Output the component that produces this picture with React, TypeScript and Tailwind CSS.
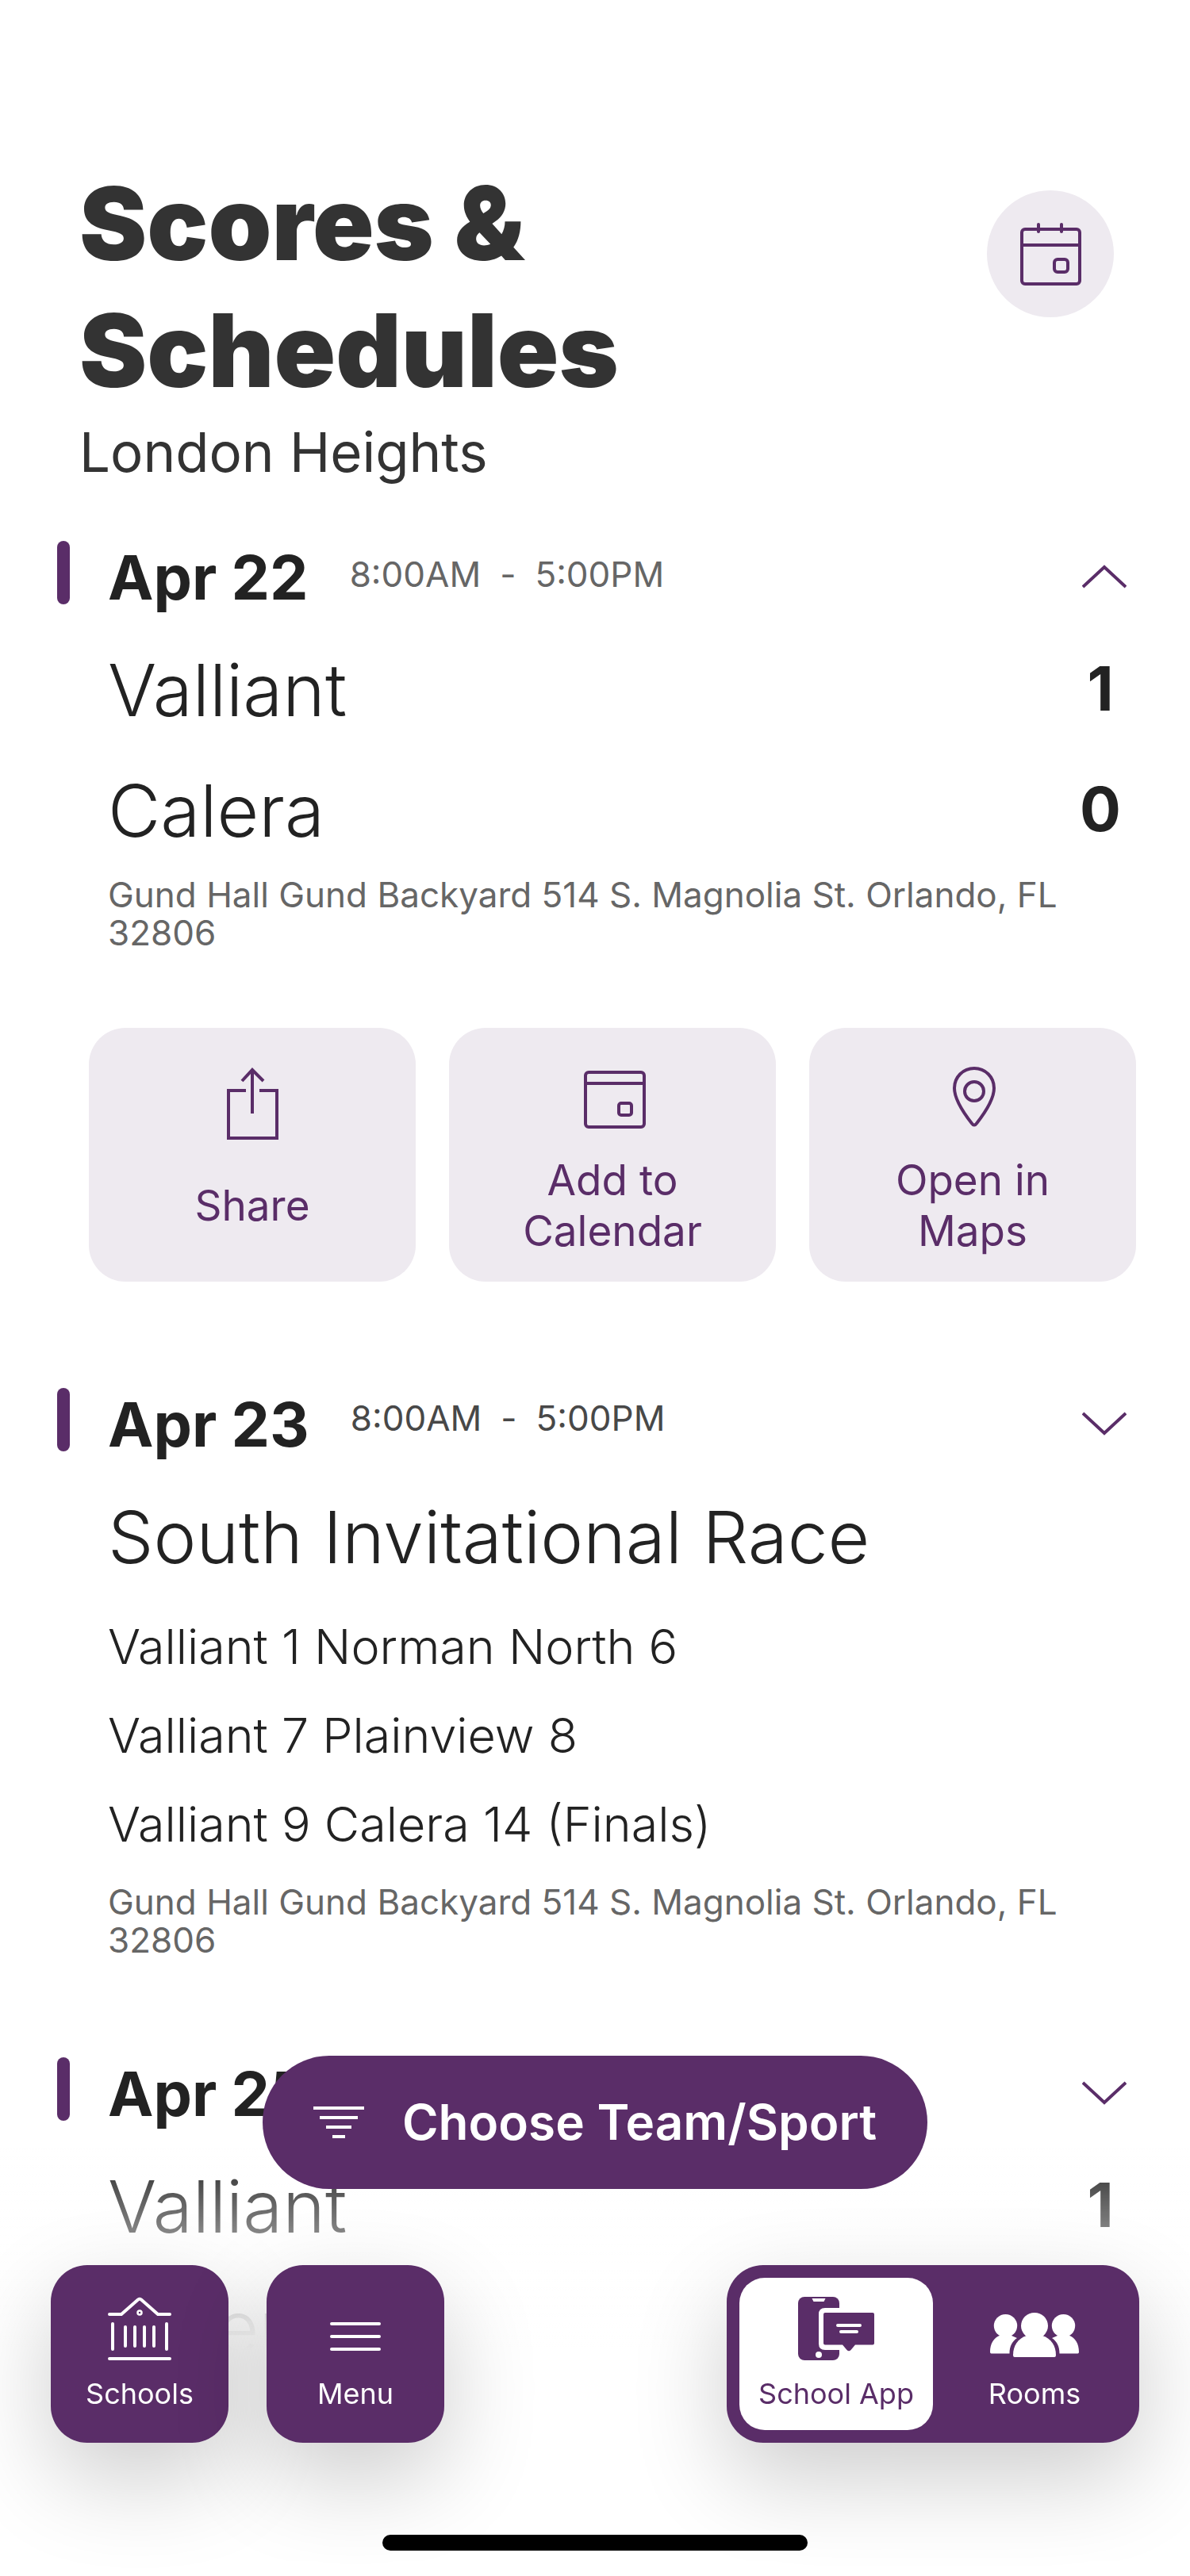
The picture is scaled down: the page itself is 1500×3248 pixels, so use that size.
import { useState } from 'react'

type Team = { name: string; score: number }

type GameEvent = {
  date: string
  start: string
  end: string
  teams?: Team[]
  title?: string
  results?: string[]
  location?: string
}

const address = 'Gund Hall Gund Backyard 514 S. Magnolia St. Orlando, FL 32806'

const events: GameEvent[] = [
  {
    date: 'Apr 22',
    start: '8:00AM',
    end: '5:00PM',
    teams: [
      { name: 'Valliant', score: 1 },
      { name: 'Calera', score: 0 },
    ],
    location: address,
  },
  {
    date: 'Apr 23',
    start: '8:00AM',
    end: '5:00PM',
    title: 'South Invitational Race',
    results: ['Valliant 1 Norman North 6', 'Valliant 7 Plainview 8', 'Valliant 9 Calera 14 (Finals)'],
    location: address,
  },
  {
    date: 'Apr 25',
    start: '8:00AM',
    end: '5:00PM',
    teams: [
      { name: 'Valliant', score: 1 },
      { name: 'Calera', score: 0 },
    ],
  },
]

function HeaderCalendarIcon() {
  return (
    <svg className="w-20 h-20" viewBox="0 0 80 80" fill="none" stroke="currentColor" strokeWidth="4" strokeLinecap="round" aria-hidden="true">
      <rect x="4" y="9" width="73" height="69" rx="4" />
      <path d="M4 29H77M25 3V12M54 3V12" />
      <rect x="45" y="47" width="17" height="16" rx="4" />
    </svg>
  )
}

function ShareIcon() {
  return (
    <svg className="w-28 h-28" viewBox="0 0 112 112" fill="none" stroke="currentColor" strokeWidth="4" aria-hidden="true">
      <path d="M48 47H26V107H87V47H65" />
      <path d="M56 76V21M43 35L56 21L70 35" />
    </svg>
  )
}

function AddCalendarIcon() {
  return (
    <svg className="w-28 h-28" viewBox="0 0 112 112" fill="none" stroke="currentColor" strokeWidth="4" aria-hidden="true">
      <rect x="22" y="24" width="74" height="69" rx="4" />
      <path d="M22 38H96" />
      <rect x="64" y="63" width="16" height="15" rx="3" />
    </svg>
  )
}

function PinIcon() {
  return (
    <svg className="w-28 h-28" viewBox="0 0 112 112" fill="none" stroke="currentColor" strokeWidth="4" aria-hidden="true">
      <path d="M58 19C44 19 33 30 33 44C33 58 46 77 55 88.500C56.500 91 59.500 91 61 88.500C70 77 83 58 83 44C83 30 72 19 58 19Z" />
      <circle cx="58" cy="48" r="12" />
    </svg>
  )
}

function Chevron({ up }: { up: boolean }) {
  return (
    <svg className="w-14 h-[30px]" viewBox="0 0 56 30" fill="none" stroke="currentColor" strokeWidth="4" aria-hidden="true">
      <path d={up ? 'M1 28L28 3L55 28' : 'M1 2L28 27L55 2'} />
    </svg>
  )
}

function FilterIcon() {
  return (
    <svg className="w-16 h-10" viewBox="0 0 64 40" stroke="currentColor" strokeWidth="4" aria-hidden="true">
      <path d="M0 2H64M8 14H56M16 26H48M24 38H40" />
    </svg>
  )
}

function SchoolsIcon() {
  return (
    <svg className="w-20 h-20" viewBox="0 0 80 80" fill="none" stroke="currentColor" strokeWidth="4" strokeLinecap="round" strokeLinejoin="round" aria-hidden="true">
      <path d="M2 22H17L38 3.500Q40 2 42 3.500L63 22H78" />
      <circle cx="40" cy="20" r="2.500" strokeWidth="2.500" />
      <path d="M6 34V66M74 34V66M22 38V62M34 38V62M46 38V62M58 38V62M2 78H78" />
    </svg>
  )
}

function MenuIcon() {
  return (
    <svg className="w-20 h-20" viewBox="0 0 80 80" stroke="currentColor" strokeWidth="4" strokeLinecap="round" aria-hidden="true">
      <path d="M10 34H70M10 50H70M10 66H70" />
    </svg>
  )
}

function SchoolAppIcon() {
  return (
    <svg className="w-24 h-20" viewBox="0 0 96 80" fill="currentColor" aria-hidden="true">
      <rect width="52" height="80" rx="8" />
      <path d="M17.500 2H34.500L32.500 6H19.500Z" fill="#fff" />
      <circle cx="26" cy="73" r="4" fill="#fff" />
      <path d="M53 14H34Q26 14 26 22V59Q26 67 34 67H53Z" fill="#fff" />
      <path d="M34 20H94Q96 20 96 22V58.500Q96 60.500 94 60.500H72L66.500 67Q64 69.500 61.500 67L56 60.500H34Q32 60.500 32 58.500V22Q32 20 34 20Z" />
      <path d="M50 36H78M54 44H74" stroke="#fff" strokeWidth="4" strokeLinecap="round" />
    </svg>
  )
}

function RoomsIcon() {
  return (
    <svg className="w-28 h-20" viewBox="0 0 112 80" fill="currentColor" aria-hidden="true">
      <ellipse cx="19.500" cy="36.500" rx="14.700" ry="14.500" />
      <path d="M1.500 71.500Q0 71.500 0 69.500C0 59 4.500 51.500 13 48.500H26L34 52C28 56 24.500 62 24.500 71.500Z" />
      <ellipse cx="92.500" cy="36.500" rx="14.700" ry="14.500" />
      <path d="M110.500 71.500Q112 71.500 112 69.500C112 59 107.500 51.500 99 48.500H86L78 52C84 56 87.500 62 87.500 71.500Z" />
      <ellipse cx="56" cy="36.500" rx="17" ry="16.500" />
      <path d="M31 76Q29 76 29 73.500C29 62 35 52.500 46 49H66C77 52.500 83 62 83 73.500Q83 76 81 76Z" />
    </svg>
  )
}

const actions = [
  { label: 'Share', icon: <ShareIcon /> },
  { label: 'Add to Calendar', icon: <AddCalendarIcon /> },
  { label: 'Open in Maps', icon: <PinIcon /> },
]

function EventActions() {
  return (
    <div className="grid grid-cols-3 gap-[42px] -ml-6 -mr-3 mt-24 mb-2.5">
      {actions.map((action) => (
        <button
          key={action.label}
          type="button"
          className="flex flex-col items-center gap-4 py-8 px-20 bg-[#eeeaf0] text-[#5a2d68] rounded-[46px]"
        >
          {action.icon}
          <span className="h-32 flex items-center text-center text-[53px] leading-16">{action.label}</span>
        </button>
      ))}
    </div>
  )
}

type EventItemProps = {
  event: GameEvent
  expanded: boolean
  onToggle: () => void
}

function EventItem({ event, expanded, onToggle }: EventItemProps) {
  return (
    <li className="flex gap-12 pl-[72px] pr-20 pb-[124px] last:pb-0">
      <div className="w-4 h-20 rounded-full bg-[#5a2d68] flex-shrink-0" />
      <div className="flex-1">
        <div className="flex items-start">
          <h2 className="text-[77px] leading-[92px] font-bold">{event.date}</h2>
          <p
            className={
              expanded
                ? 'flex gap-6 ml-[52px] text-[44px] leading-[84px] text-[#666666]'
                : 'flex gap-6 ml-[52px] text-[44px] leading-[76px] text-[#484848]'
            }
          >
            <span>{event.start}</span>
            <span>-</span>
            <span>{event.end}</span>
          </p>
          <button
            type="button"
            onClick={onToggle}
            aria-expanded={expanded}
            aria-label={`Toggle ${event.date}`}
            className="ml-auto mt-[30px] text-[#5a2d68]"
          >
            <Chevron up={expanded} />
          </button>
        </div>

        {/* Teams and scores */}
        <div className="mt-5 mb-1.5">
          {event.teams?.map((team) => (
            <div key={team.name} className="flex items-start justify-between">
              <span className="text-[91px] leading-[152px] font-light">{team.name}</span>
              <span className="w-[66px] text-center text-[77px] leading-[148px] font-bold">{team.score}</span>
            </div>
          ))}
          {event.title && <p className="text-[91px] leading-[152px] font-light">{event.title}</p>}
          {event.results && (
            <ul className="pt-1.5 pb-3">
              {event.results.map((result) => (
                <li key={result} className="text-[61px] leading-28 font-light">{result}</li>
              ))}
            </ul>
          )}
        </div>

        {event.location && <p className="text-[44px] leading-12 text-[#666666]">{event.location}</p>}
        {expanded && <EventActions />}
      </div>
    </li>
  )
}

export default function App() {
  const [open, setOpen] = useState<string | null>('Apr 22')

  return (
    <div className="min-h-screen bg-white text-[#222222] font-['Inter',sans-serif]">
      <header className="flex items-start justify-between pt-[202px] pl-[100px] pr-24">
        <div className="text-[#333333]">
          <h1 className="max-w-[900px] text-[128px] leading-40 font-black">Scores & Schedules</h1>
          <p className="mt-1 text-[69px] leading-[88px]">London Heights</p>
        </div>
        <button
          type="button"
          aria-label="Open calendar"
          className="w-40 h-40 mt-[38px] flex items-center justify-center rounded-full bg-[#eeeaf0] text-[#5a2d68]"
        >
          <HeaderCalendarIcon />
        </button>
      </header>

      <ul className="mt-[68px]">
        {events.map((event) => (
          <EventItem
            key={event.date}
            event={event}
            expanded={open === event.date}
            onToggle={() => setOpen(open === event.date ? null : event.date)}
          />
        ))}
      </ul>

      {/* Floating controls */}
      <div className="fixed inset-x-0 bottom-0 flex flex-col items-center pb-8">
        <div className="absolute inset-x-0 bottom-0 h-[540px] bg-[linear-gradient(to_bottom,rgba(255,255,255,0)_0px,rgba(255,255,255,0.94)_220px,#fff_256px)]" />

        <button
          type="button"
          className="relative h-[168px] px-16 flex items-center gap-12 rounded-full bg-[#5a2d68] text-white text-[62px] leading-20 font-semibold"
        >
          <FilterIcon />
          Choose Team/Sport
        </button>

        <nav className="relative w-full mt-24 px-16 flex items-start">
          <button
            type="button"
            className="w-56 h-56 pt-10 flex flex-col items-center gap-[18px] rounded-[46px] bg-[#5a2d68] text-white shadow-[0_44px_120px_rgba(0,0,0,0.2)]"
          >
            <SchoolsIcon />
            <span className="text-4xl leading-12">Schools</span>
          </button>
          <button
            type="button"
            className="w-56 h-56 ml-12 pt-10 flex flex-col items-center gap-[18px] rounded-[46px] bg-[#5a2d68] text-white shadow-[0_44px_120px_rgba(0,0,0,0.2)]"
          >
            <MenuIcon />
            <span className="text-4xl leading-12">Menu</span>
          </button>

          <div className="w-[520px] h-56 ml-auto p-4 pr-1 flex rounded-[46px] bg-[#5a2d68] shadow-[0_44px_120px_rgba(0,0,0,0.2)]">
            <button
              type="button"
              aria-pressed="true"
              className="w-[244px] pt-6 flex flex-col items-center gap-[18px] rounded-[32px] bg-white text-[#5a2d68]"
            >
              <SchoolAppIcon />
              <span className="text-4xl leading-12">School App</span>
            </button>
            <button type="button" aria-pressed="false" className="flex-1 pt-6 flex flex-col items-center gap-[18px] text-white">
              <RoomsIcon />
              <span className="text-4xl leading-12">Rooms</span>
            </button>
          </div>
        </nav>

        <div className="relative w-[536px] h-5 mt-[116px] rounded-full bg-black" />
      </div>
    </div>
  )
}
